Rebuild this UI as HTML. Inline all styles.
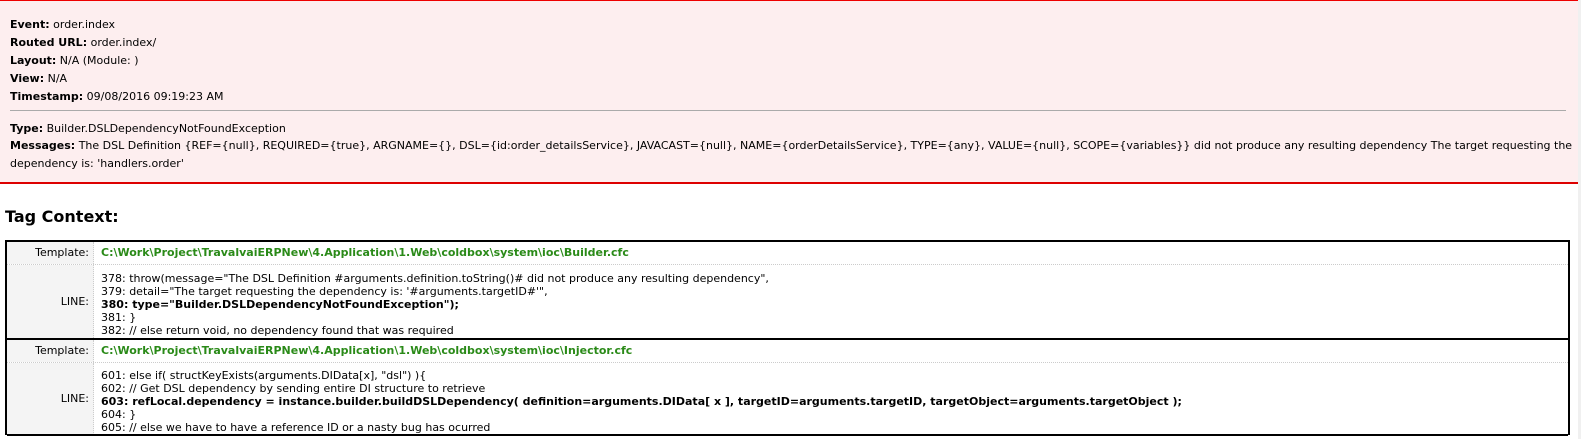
<!DOCTYPE html>
<html><head><style>
html,body{margin:0;padding:0;width:1581px;height:439px;overflow:hidden;background:#fff;font-family:"DejaVu Sans","Liberation Sans",sans-serif;font-size:11px;color:#000}
.sb{position:absolute;left:1578px;top:0;width:3px;height:439px;background:#f0f0f0}
.err{position:absolute;left:0;top:0;width:1578px;height:184px;background:#fdeeef;border-top:1px solid #e00;border-bottom:2px solid #d00;box-sizing:border-box}
.ln{position:absolute;left:10px;white-space:nowrap;line-height:14px}
hr{position:absolute;left:10px;width:1556px;top:109px;margin:0;border:0;border-top:1px solid #aaa;height:0}
h2{position:absolute;left:5px;top:207px;margin:0;font-size:16px;font-weight:bold;font-family:"DejaVu Sans",sans-serif}
.tbl{position:absolute;left:5px;top:240px;width:1565px;height:195px;border:2px solid #000;border-bottom:0;box-sizing:border-box}
.lab{position:absolute;left:0;width:87px;background:#f4f4f4;border-right:1px dotted #ccc;text-align:right;box-sizing:border-box;padding-right:4px}
.dash{position:absolute;left:0;right:0;border-top:1px dotted #ccc}
.thick{position:absolute;left:0;right:0;border-top:2px solid #000}
.tpl{position:absolute;left:94px;color:#2a8a18;font-weight:bold;white-space:nowrap}
.code{position:absolute;left:94px;line-height:13px;white-space:nowrap}
b{font-weight:bold}
</style></head><body>
<div class="err">
<div class="ln" style="top:17px"><b>Event:</b> order.index</div>
<div class="ln" style="top:35px"><b>Routed URL:</b> order.index/</div>
<div class="ln" style="top:53px"><b>Layout:</b> N/A (Module: )</div>
<div class="ln" style="top:71px"><b>View:</b> N/A</div>
<div class="ln" style="top:89px"><b>Timestamp:</b> 09/08/2016 09:19:23 AM</div>
<hr>
<div class="ln" style="top:121px"><b>Type:</b> Builder.DSLDependencyNotFoundException</div>
<div class="ln" style="top:138px"><b>Messages:</b> The DSL Definition {REF={null}, REQUIRED={true}, ARGNAME={}, DSL={id:order_detailsService}, JAVACAST={null}, NAME={orderDetailsService}, TYPE={any}, VALUE={null}, SCOPE={variables}} did not produce any resulting dependency The target requesting the</div>
<div class="ln" style="top:156px">dependency is: 'handlers.order'</div>
</div>
<h2>Tag Context:</h2>
<div class="tbl">
<div class="lab" style="top:0;height:22px;line-height:22px">Template:</div>
<div class="tpl" style="top:4px">C:\Work\Project\TravalvaiERPNew\4.Application\1.Web\coldbox\system\ioc\Builder.cfc</div>
<div class="dash" style="top:22px"></div>
<div class="lab" style="top:23px;height:73px;line-height:73px">LINE:</div>
<div class="code" style="top:30px">378: throw(message="The DSL Definition #arguments.definition.toString()# did not produce any resulting dependency",<br>379: detail="The target requesting the dependency is: '#arguments.targetID#'",<br><b>380: type="Builder.DSLDependencyNotFoundException");</b><br>381: }<br>382: // else return void, no dependency found that was required</div>
<div class="thick" style="top:96px"></div>
<div class="lab" style="top:98px;height:22px;line-height:22px">Template:</div>
<div class="tpl" style="top:102px">C:\Work\Project\TravalvaiERPNew\4.Application\1.Web\coldbox\system\ioc\Injector.cfc</div>
<div class="dash" style="top:120px"></div>
<div class="lab" style="top:121px;height:72px;line-height:72px">LINE:</div>
<div class="code" style="top:127px">601: else if( structKeyExists(arguments.DIData[x], "dsl") ){<br>602: // Get DSL dependency by sending entire DI structure to retrieve<br><b>603: refLocal.dependency = instance.builder.buildDSLDependency( definition=arguments.DIData[ x ], targetID=arguments.targetID, targetObject=arguments.targetObject );</b><br>604: }<br>605: // else we have to have a reference ID or a nasty bug has ocurred</div>
<div class="thick" style="top:192px"></div>
</div>
<div class="sb"></div>
</body></html>
